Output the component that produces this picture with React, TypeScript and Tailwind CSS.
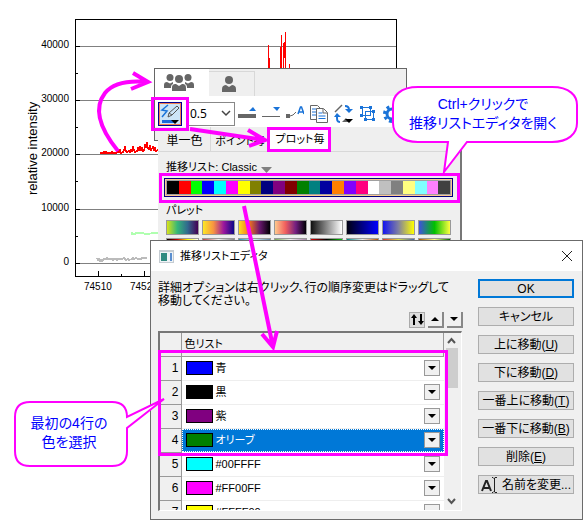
import React from "react"

const stripColors = [
  "#000000", "#ff0000", "#00ff00", "#0000ff", "#00ffff", "#ff00ff", "#ffff00", "#808000",
  "#000080", "#800080", "#800000", "#008000", "#008080", "#0000a0", "#ff8000", "#8000ff",
  "#ff0080", "#ffffff", "#c0c0c0", "#808080", "#ffff80", "#80ffff", "#ff80ff", "#404040",
]

const palettes = [
  ["#d8e219,#35b779,#31688e,#440154", "#000,#c00,#ff0,#fff"],
  ["#fde725,#f89540,#9c179e,#0d0887", "#b44,#eee,#888"],
  ["#fcde20,#f1731d,#6a176e,#000004", "#29b,#cee,#68a"],
  ["#fec98d,#f1605d,#721f81,#000004", "#7a5,#eee,#a8a"],
  ["#101010,#ffffff", "#d00,#000,#0c0"],
  ["#000010,#0000ff", "#088,#eee,#b50"],
  ["#1414f0,#8080a0,#ffff00", "#d33,#dd4,#46a"],
  ["#4050e0,#00c000,#ffff40", "#a50,#ff8,#060"],
]

const rows = [
  { color: "#0000ff", label: "青" },
  { color: "#000000", label: "黒" },
  { color: "#800080", label: "紫" },
  { color: "#008000", label: "オリーブ", selected: true },
  { color: "#00ffff", label: "#00FFFF" },
  { color: "#ff00ff", label: "#FF00FF" },
  { color: "#ffff00", label: "#FFFF00" },
]

const actions = [
  { label: "上に移動", hotkey: "U" },
  { label: "下に移動", hotkey: "D" },
  { label: "一番上に移動", hotkey: "T" },
  { label: "一番下に移動", hotkey: "B" },
  { label: "削除", hotkey: "E" },
]

function Chart() {
  const grid = [46, 100, 154, 209, 263]
  return (
    <svg
      className="absolute top-0 left-0 font-['Liberation_Sans',sans-serif] text-[10px]"
      width="400"
      height="300"
      shapeRendering="crispEdges">
      <text x="37" y="195" transform="rotate(-90 37 195)" fontSize="13">
        relative intensity
      </text>
      {grid.map((y, i) => (
        <g key={y}>
          <path d={`M76 ${y + 0.5}H396`} stroke="#808080" />
          <path d={`M76 ${y + 0.5}h4`} stroke="#000" />
          {i < 4 && <path d={`M76 ${y + 27.5}h2`} stroke="#000" />}
          <text x="69" y={y + 2} textAnchor="end">
            {40000 - i * 10000}
          </text>
        </g>
      ))}
      <rect x="75.5" y="19.5" width="321" height="257" fill="none" stroke="#000" />
      <path d="M98.5 276v-5M121.5 276v-2M144.5 276v-5" stroke="#000" />
      <text x="84" y="290">74510</text>
      <text x="130" y="290">74520</text>
      <path
        d="M100 153h3l1-1 1 1 1-1 1 1h4l1-1 1 1h3l2-2 1 1 1-2 1 3 2-1 1-2 1-3 1 4 1 1 2-1 1 1 1-2 1 1 1-4 1 3 1 2 2-1 1-3 1 2 1-3 1 3 1-2 1 3 1-1 1-5 1 3 1-6 1 6 1 1 1-3 1 4 2-3 1 3 1-2 1 3 2-1 1-2 1 2h2"
        fill="none"
        stroke="#f00"
        strokeWidth="1.5"
      />
      <path
        d="M268.5 68V45M269.5 68V58M280.5 68V47M281.5 68V35M283.5 68V43M284.5 58V42M285.5 68V32M289.5 68v-4"
        stroke="#f00"
      />
      <path d="M132 232v2h3l1-1h7l2 1h4l3-1h6" fill="none" stroke="#b0ffb0" strokeWidth="1.5" />
      <path
        d="M97 258l1 2 1-1 1 2 1-1 1 1 2-2h2l1-1 1 1h4l1 1 1-1h2l1 1 1-1h4l2-1 1 1 1 1 2-1 1 1 3-1 1-1 1 1 2-1 2 1h3l1-1h5"
        fill="none"
        stroke="#bbb"
        strokeWidth="1.5"
      />
    </svg>
  )
}

function PersonIcon() {
  return (
    <svg width="14" height="18" viewBox="0 0 14 18" fill="#666">
      <circle cx="7" cy="5" r="4" />
      <path d="M0 17v-3c0-3 2-4 4-4l3 2 3-2c2 0 4 1 4 4v3z" />
    </svg>
  )
}

function PeopleIcon() {
  return (
    <svg width="30" height="19" viewBox="0 0 30 19" fill="#666">
      <circle cx="6" cy="4.5" r="3.5" />
      <circle cx="24" cy="4.5" r="3.5" />
      <path d="M0 15v-3c0-2 1-3 3-3l3 1.5L9 9v2c-2 1-2 2-2 4zM30 15v-3c0-2-1-3-3-3l-3 1.5L21 9v2c2 1 2 2 2 4z" />
      <circle cx="15" cy="6" r="4" />
      <path d="M8 18v-3c0-3 1-4 4-4l3 2 3-2c3 0 4 1 4 4v3z" />
    </svg>
  )
}

function ToolButton({ label, children }: { label: string; children: React.ReactNode }) {
  return (
    <button type="button" aria-label={label} className="flex shrink-0 items-center justify-center">
      {children}
    </button>
  )
}

function Toolbar() {
  return (
    <section className="absolute top-[68px] left-[154px] h-[73px] w-[253px] border border-[#666] bg-[#efefef]">
      <div className="flex h-[27px] items-end">
        <button
          type="button"
          aria-label="グループ"
          className="flex h-full w-[54px] items-center justify-center bg-white pr-[6px]">
          <PeopleIcon />
        </button>
        <button
          type="button"
          aria-label="単独"
          className="flex h-[25px] w-[46px] items-center justify-center border-t border-r border-[#d8d8d8] pr-[6px]">
          <PersonIcon />
        </button>
      </div>
      <div className="flex h-[31px] items-center bg-white pt-3 pb-2 pl-[3px]">
        <button
          type="button"
          aria-label="線色"
          className="flex size-6 shrink-0 items-center justify-center border border-[#000090] bg-[#cce4f7] outline-1 -outline-offset-2 outline-[#f08050]">
          <svg width="20" height="20" viewBox="0 0 20 20" fill="none">
            <path d="M8 1L2 6l5 1-5 6" stroke="#1a73d8" strokeWidth="1.5" />
            <path d="M8 13l1-4 8-7 2 2-7 7z M9 9l3 2" stroke="#555" />
            <path d="M2 16h10l3 3H2z" fill="#1a6ad8" />
            <path d="M11 16h8l-4 4z" fill="#000" />
          </svg>
        </button>
        <div className="relative ml-1">
          <select
            aria-label="線幅"
            className="block h-6 w-[49px] appearance-none border border-[#888] bg-white pl-[3px] font-['Noto_Sans',sans-serif] text-[12px] leading-5"
            defaultValue="0.5">
            <option>0.5</option>
          </select>
          <svg className="pointer-events-none absolute top-2 right-1" width="10" height="8">
            <path d="M1 1l4 4 4-4" fill="none" stroke="#444" strokeWidth="1.5" />
          </svg>
        </div>
        <div className="flex grow items-center gap-[6px] pl-[3px]">
          <ToolButton label="太く">
            <svg width="18" height="18">
              <path d="M0 9h18v4H0z" fill="#666" />
              <path d="M11 6l4-4 3 4z" fill="#1a73d8" />
            </svg>
          </ToolButton>
          <ToolButton label="細く">
            <svg width="18" height="18">
              <path d="M0 11h18v1H0z" fill="#666" />
              <path d="M11 2h7l-3 4z" fill="#1a73d8" />
            </svg>
          </ToolButton>
          <ToolButton label="ラベル">
            <svg width="18" height="18" fill="none">
              <path d="M0 9h4v4H0z" fill="#666" />
              <path d="M4 11l3-1 3-3" stroke="#666" />
              <path d="M12 9l2.500-7h1L18 9M13 7h4" stroke="#1a73d8" strokeWidth="1.5" />
            </svg>
          </ToolButton>
          <ToolButton label="コピー">
            <svg width="18" height="18" fill="#fff" stroke="#666">
              <path d="M.5.5h7l3 3v11H.5z" />
              <path d="M2 4h4M2 7h4M2 10h4" stroke="#1a73d8" />
              <path d="M6.5 3.5h7l4 4v10h-11z" />
              <path d="M13 4v4h4" />
              <path d="M8.500 8h4M8.500 11h7M8.500 13.500h7" stroke="#1a73d8" />
            </svg>
          </ToolButton>
          <ToolButton label="入替">
            <svg width="19" height="20" fill="none">
              <path d="M1 8l7-7" stroke="#666" strokeWidth="1.5" />
              <path d="M11 2c3 0 4 1 4 4M6 18c-3 0-3-2-3-5" stroke="#1a73d8" strokeWidth="2" />
              <path d="M11 5h8l-4 4zM0 13l3-4 4 4z" fill="#1a73d8" />
              <path d="M8 18l4-4 3 4z" fill="#666" />
              <path d="M11 15h8l-4 4z" fill="#000" />
            </svg>
          </ToolButton>
          <ToolButton label="グループ化">
            <svg width="18" height="18" fill="none" stroke="#1a73d8" shapeRendering="crispEdges">
              <path d="M3.500 2.500h8v8h-8zM6.500 6.500h8v8h-8z" />
              <path
                d="M1 1h3v3H1zM10 1h3v3h-3zM1 9h3v3H1zM5 13h3v3H5zM13 13h3v3h-3zM13 5h3v3h-3z"
                fill="#1a73d8"
                stroke="none"
              />
            </svg>
          </ToolButton>
          <ToolButton label="設定">
            <svg width="18" height="18" viewBox="0 0 18 18" fill="none" stroke="#1a73d8">
              <circle cx="9" cy="9" r="5" strokeWidth="3" />
              <circle cx="9" cy="9" r="7.5" strokeWidth="3" strokeDasharray="3 2.89" />
            </svg>
          </ToolButton>
        </div>
      </div>
    </section>
  )
}

function PalettePanel() {
  return (
    <section className="absolute top-[127px] left-[158px] h-[120px] w-[304px] border-r-2 border-[#777] bg-[#efefef] text-[11px] leading-4">
      <div className="flex h-[25px] items-center border-b border-[#d8d8d8] pl-[5px]">
        <button type="button" className="h-full w-12 border-r border-[#d8d8d8] pt-1 pr-1 text-[12px]">
          単一色
        </button>
        <button type="button" className="h-full w-[58px] pt-1 whitespace-nowrap">
          ポイント毎
        </button>
        <button type="button" className="h-full w-[62px] bg-white whitespace-nowrap">
          プロット毎
        </button>
      </div>
      <div className="px-2">
        <button type="button" className="mt-[5px] flex h-5 items-center gap-1">
          推移リスト: Classic
          <svg width="11" height="12">
            <path d="M0 6h11l-5.500 6z" fill="#808080" />
          </svg>
        </button>
        <div className="mt-px -ml-[2px] flex h-[19px] w-[289px] border border-[#000080] bg-[#a0a0a0] p-[2px] outline-1 -outline-offset-2 outline-[#ffc890]">
          {stripColors.map((color) => (
            <i key={color} className="grow" style={{ backgroundColor: color }} />
          ))}
        </div>
        <div className="mt-1 h-[19px] leading-[18px]">パレット</div>
        <div className="flex w-[285px] justify-between">
          {palettes.map(([top, bottom]) => (
            <div key={top} className="flex flex-col gap-[3px]">
              <button
                type="button"
                aria-label="パレット"
                className="h-[15px] w-[33px] border border-[#999]"
                style={{ backgroundImage: `linear-gradient(90deg, ${top})` }}
              />
              <button
                type="button"
                aria-label="パレット"
                className="h-[15px] w-[33px] border border-[#999]"
                style={{ backgroundImage: `linear-gradient(90deg, ${bottom})` }}
              />
            </div>
          ))}
        </div>
      </div>
    </section>
  )
}

function DownTriangle() {
  return (
    <svg width="8" height="4">
      <path d="M0 0h8L4 4z" />
    </svg>
  )
}

function ColorTable() {
  return (
    <div className="flex h-[180px] overflow-hidden border-t-2 border-r border-b border-l-2 border-t-[#777] border-r-white border-b-white border-l-[#777] bg-white">
      <table className="h-max grow table-fixed border-collapse text-left">
        <thead>
          <tr className="h-[23px] border-b border-[#999] bg-[#f0f0f0] text-[11px]">
            <th className="w-[21px] border-r border-[#999]" />
            <th className="border-r border-[#999] pl-[3px] font-normal">色リスト</th>
          </tr>
        </thead>
        <tbody>
          {rows.map((row, i) => (
            <tr key={row.label} className="h-6">
              <th className="border-r border-b border-[#999] bg-[#f0f0f0] pr-[2px] text-right font-normal">
                {i + 1}
              </th>
              <td className={row.selected ? "bg-[#0078d7] p-0 text-white" : "border-b border-[#eee] p-0"}>
                <div
                  className={
                    row.selected
                      ? "flex h-[23px] items-center border border-dotted border-white px-[3px]"
                      : "flex h-[23px] items-center px-1"
                  }>
                  <span
                    className="h-[14px] w-[27px] border border-black"
                    style={{ backgroundColor: row.color }}
                  />
                  <span className="grow pl-[3px] text-[11px] leading-4">{row.label}</span>
                  <button
                    type="button"
                    aria-label={`${row.label} を変更`}
                    className="flex size-4 items-center justify-center border border-[#999] bg-[#f0f0f0] text-black">
                    <DownTriangle />
                  </button>
                </div>
              </td>
            </tr>
          ))}
        </tbody>
      </table>
      <div className="flex w-[17px] flex-col items-center bg-[#f0f0f0] pr-[2px]">
        <svg className="shrink-0" width="9" height="15">
          <path d="M1 10l3.500-4L8 10" fill="none" stroke="#555" strokeWidth="2" />
        </svg>
        <div className="h-10 w-3 bg-[#cdcdcd]" />
        <svg className="mt-auto shrink-0" width="9" height="15">
          <path d="M1 4l3.500 4L8 4" fill="none" stroke="#555" strokeWidth="2" />
        </svg>
      </div>
    </div>
  )
}

const actionClass =
  "flex h-[19px] items-center justify-center border border-[#adadad] bg-[#e1e1e1] leading-4 whitespace-nowrap"

function EditorDialog() {
  return (
    <section
      role="dialog"
      aria-labelledby="editor-title"
      className="absolute top-[240px] left-[150px] w-[433px] border border-[#6b6b6b] bg-[#f0f0f0] text-[12px]">
      <header className="flex h-[30px] items-center bg-white pr-[9px] pl-2">
        <svg width="15" height="13">
          <rect width="15" height="13" fill="#c5ccd2" />
          <rect x="1" y="2" width="13" height="10" fill="#eef3f6" />
          <rect x="2" y="3" width="6" height="8" fill="#2f8a80" />
          <rect x="11" y="3" width="2" height="8" fill="#5b8fd0" />
        </svg>
        <h1 id="editor-title" className="grow pl-[6px] text-[11px]">
          推移リストエディタ
        </h1>
        <button type="button" aria-label="閉じる">
          <svg width="12" height="12">
            <path d="M1 1l10 10M11 1L1 11" stroke="#222" />
          </svg>
        </button>
      </header>
      <div className="flex gap-4 p-2 pl-[7px]">
        <div className="min-w-0 grow">
          <p className="pt-[3px] leading-[13px] whitespace-nowrap">
            詳細オプションは右クリック、行の順序変更はドラッグして
            <br />
            移動してください。
          </p>
          <div className="mt-1 mb-[3px] flex h-4 justify-end gap-[3px] -mr-px">
            <button
              type="button"
              aria-label="並べ替え"
              className="flex size-4 items-center justify-center border border-[#aaa] bg-[#ddd]">
              <svg width="13" height="12">
                <path d="M0 4l3-4 3 4H4v7H2V4zM9 0h2v7h2l-3 4-3-4h2z" />
              </svg>
            </button>
            <button
              type="button"
              aria-label="上へ"
              className="flex size-4 items-center justify-center border-r-2 border-b-2 border-[#888] bg-[#f0f0f0]">
              <svg width="8" height="4">
                <path d="M0 4h8L4 0z" />
              </svg>
            </button>
            <button
              type="button"
              aria-label="下へ"
              className="flex size-4 items-center justify-center border-r-2 border-b-2 border-[#888] bg-[#f0f0f0]">
              <DownTriangle />
            </button>
          </div>
          <ColorTable />
        </div>
        <div className="flex w-24 shrink-0 flex-col gap-[9px]">
          <button
            type="button"
            className="flex h-[19px] items-center justify-center border-2 border-[#0078d7] bg-[#e1e1e1] leading-4">
            OK
          </button>
          <button type="button" className={actionClass}>
            キャンセル
          </button>
          {actions.map((a) => (
            <button key={a.hotkey} type="button" className={actionClass}>
              {a.label}(<u>{a.hotkey}</u>)
            </button>
          ))}
          <button type="button" className={actionClass}>
            <svg className="mr-1" width="17" height="16" fill="none">
              <path d="M1 14L5 4h1l4 10M3 11h5" stroke="#222" strokeWidth="2" />
              <path d="M11 .5h1l1 1 1-1h2M13.500 1v14M11 15.500h1l1-1 1 1h2" stroke="#222" />
            </svg>
            名前を変更...
          </button>
        </div>
      </div>
    </section>
  )
}

function Annotations() {
  return (
    <>
      <svg
        className="pointer-events-none absolute top-0 left-0"
        width="583"
        height="520"
        fill="none"
        stroke="#ff00ff"
        strokeWidth="3">
        <rect x="152.5" y="98.5" width="35" height="31" />
        <rect x="268.5" y="128.5" width="61" height="22" />
        <rect x="160.5" y="174.5" width="298" height="27" />
        <rect x="159.5" y="351.5" width="287" height="103" />
        <g strokeWidth="4">
          <path d="M118 151C96 124 95 106 105 93c8-10 22-13 43-11M133 73l15 9-17 7" />
          <path d="M190 129l75 11M248 130l17 10-16 6" />
          <path d="M244 206l29 141M262 334l11 13 4-16" />
        </g>
        <g fill="#fff" strokeWidth="2">
          <path d="M418 87H552C570 87 577 96 577 105V123C577 134 568 142 552 142H467L444 172 448 142H418C402 142 393 134 393 123V105C393 96 400 87 418 87Z" />
          <path d="M30 402H112Q127 402 127 417L164 399 127 428V451Q127 466 112 466H30Q15 466 15 451V417Q15 402 30 402Z" />
        </g>
      </svg>
      <p className="absolute top-[95px] left-[394px] w-[178px] text-center text-[14px] leading-[19px] whitespace-nowrap text-[#0000ff]">
        Ctrl+クリックで
        <br />
        推移リストエディタを開く
      </p>
      <p className="absolute top-[414px] left-[15px] w-[108px] text-center text-[14px] leading-[19px] whitespace-nowrap text-[#0000ff]">
        最初の4行の
        <br />
        色を選択
      </p>
    </>
  )
}

export default function App() {
  return (
    <main className="relative min-h-[520px] w-full overflow-hidden bg-white font-['Liberation_Sans','Noto_Sans_CJK_JP',sans-serif] text-black [font-feature-settings:'palt']">
      <Chart />
      <Toolbar />
      <PalettePanel />
      <EditorDialog />
      <Annotations />
    </main>
  )
}
